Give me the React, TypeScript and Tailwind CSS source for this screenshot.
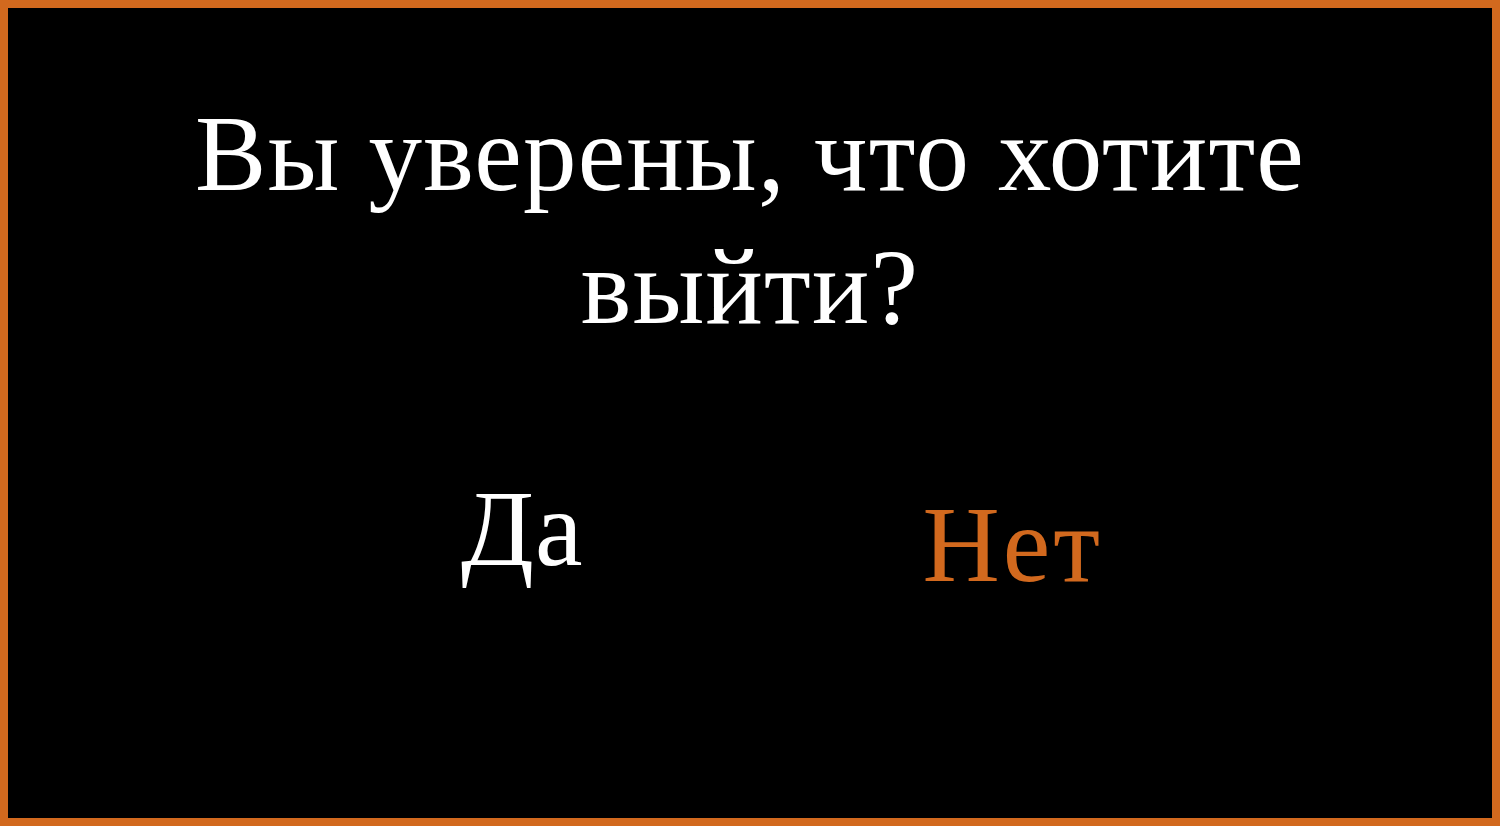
import React from "react";

const App = () => {
  return (
    <div className="h-[826px] w-full border-[8px] border-[#d2691e] bg-black flex flex-col items-center font-['Liberation_Serif',serif]">
      <h1 className="mt-[80px] text-center text-white text-[107px] leading-[133px] tracking-[1.2px] font-normal">
        Вы уверены, что хотите
        <br />
        выйти?
      </h1>
      <div className="mt-[138px] flex items-start">
        <button className="ml-[64px] -mt-[16px] text-white text-[107px] leading-none tracking-[1px]">Да</button>
        <button className="ml-[339px] text-[#d2691e] text-[107px] leading-none tracking-[3px]">Нет</button>
      </div>
    </div>
  );
};

export default App;
